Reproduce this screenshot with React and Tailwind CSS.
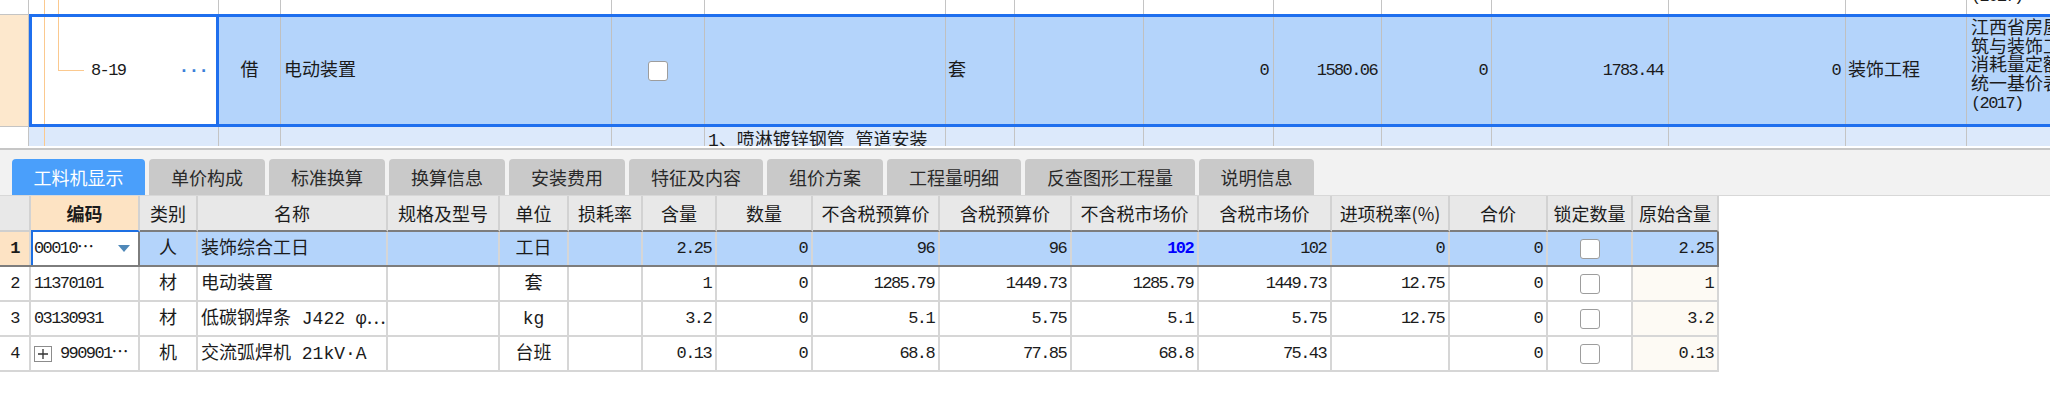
import React from 'react';

const mono = "font-['Liberation_Mono','Noto_Sans_CJK_SC',monospace]";
const num = 'text-[17px] tracking-[-1.6px]';
const tree = 'absolute w-px bg-[#fbc98f]';

// top grid (item list above the tabs)
const midCols = ['w-[62px]', 'w-[331px]', 'w-[93px]', 'w-[241px]', 'w-[69px]', 'w-[129px]', 'w-[130px]', 'w-[108px]', 'w-[110px]', 'w-[177px]', 'w-[177px]', 'w-[121px]'];

const tabs = [
  { label: '工料机显示', w: 'w-[133px]', active: true },
  { label: '单价构成', w: 'w-[116px]' },
  { label: '标准换算', w: 'w-[116px]' },
  { label: '换算信息', w: 'w-[116px]' },
  { label: '安装费用', w: 'w-[116px]' },
  { label: '特征及内容', w: 'w-[134px]' },
  { label: '组价方案', w: 'w-[116px]' },
  { label: '工程量明细', w: 'w-[134px]' },
  { label: '反查图形工程量', w: 'w-[170px]' },
  { label: '说明信息', w: 'w-[115px]' },
];

// bottom grid columns
const cols = [
  { key: 'no', label: '', w: 'w-[31px]', align: 'justify-center' },
  { key: 'code', label: '编码', w: 'w-[109px]', align: 'justify-start' },
  { key: 'type', label: '类别', w: 'w-[58px]', align: 'justify-center' },
  { key: 'name', label: '名称', w: 'w-[190px]', align: 'justify-start' },
  { key: 'spec', label: '规格及型号', w: 'w-[112px]', align: 'justify-start' },
  { key: 'unit', label: '单位', w: 'w-[69px]', align: 'justify-center' },
  { key: 'loss', label: '损耗率', w: 'w-[74px]', align: 'justify-end' },
  { key: 'qty', label: '含量', w: 'w-[74px]', align: 'justify-end' },
  { key: 'count', label: '数量', w: 'w-[96px]', align: 'justify-end' },
  { key: 'p1', label: '不含税预算价', w: 'w-[127px]', align: 'justify-end' },
  { key: 'p2', label: '含税预算价', w: 'w-[132px]', align: 'justify-end' },
  { key: 'p3', label: '不含税市场价', w: 'w-[127px]', align: 'justify-end' },
  { key: 'p4', label: '含税市场价', w: 'w-[133px]', align: 'justify-end' },
  { key: 'tax', label: '进项税率(%)', w: 'w-[118px]', align: 'justify-end' },
  { key: 'total', label: '合价', w: 'w-[98px]', align: 'justify-end' },
  { key: 'lock', label: '锁定数量', w: 'w-[85px]', align: 'justify-center' },
  { key: 'orig', label: '原始含量', w: 'w-[86px]', align: 'justify-end' },
];

const rows = [
  { no: '1', code: '00010⋯', type: '人', name: '装饰综合工日', unit: '工日', qty: '2.25', count: '0', p1: '96', p2: '96', p3: '102', p4: '102', tax: '0', total: '0', orig: '2.25' },
  { no: '2', code: '11370101', type: '材', name: '电动装置', unit: '套', qty: '1', count: '0', p1: '1285.79', p2: '1449.73', p3: '1285.79', p4: '1449.73', tax: '12.75', total: '0', orig: '1' },
  { no: '3', code: '03130931', type: '材', name: '低碳钢焊条 J422 φ⋯', unit: 'kg', qty: '3.2', count: '0', p1: '5.1', p2: '5.75', p3: '5.1', p4: '5.75', tax: '12.75', total: '0', orig: '3.2' },
  { no: '4', code: '990901⋯', type: '机', name: '交流弧焊机 21kV·A', unit: '台班', qty: '0.13', count: '0', p1: '68.8', p2: '77.85', p3: '68.8', p4: '75.43', tax: '', total: '0', orig: '0.13', plus: true },
];

const numeric = ['qty', 'count', 'p1', 'p2', 'p3', 'p4', 'tax', 'total', 'orig', 'no'];

const Checkbox = () => (
  <span className="inline-block w-[20px] h-[20px] bg-white border border-[#9d9d9d] rounded-[3px]" />
);

const TopRowA = () => (
  <div className="flex h-[14px] overflow-hidden bg-white">
    <div className="w-[29px] shrink-0 border-r border-[#c4c4c4]" />
    <div className="relative w-[190px] shrink-0 border-r border-[#c4c4c4]">
      <span className={`${tree} left-[15px] top-0 bottom-0`} />
      <span className={`${tree} left-[29px] top-0 bottom-0`} />
    </div>
    {midCols.map((w, i) => (
      <div key={i} className={`${w} shrink-0 border-r border-[#c4c4c4]`} />
    ))}
    <div className="w-[140px] shrink-0 flex items-end pl-[4px] leading-[18px]">
      <span className={`mb-[8px] whitespace-nowrap ${num}`}>(2017)</span>
    </div>
  </div>
);

const TopRowB = () => (
  <div className="flex h-[113px]">
    <div className="w-[29px] shrink-0 bg-[#fde8cd] border-y border-r border-[#c4c4c4]" />
    <div className="flex border-y-[3px] border-[#1f6fee] bg-[#b4d4fb]">
      {/* code cell, being edited */}
      <div className="relative w-[190px] shrink-0 bg-white border-x-[3px] border-[#1f6fee] flex items-center justify-between pl-[59px] pr-[8px]">
        <span className={`${tree} left-[12px] top-0 bottom-0`} />
        <span className={`${tree} left-[26px] top-0 h-[53px]`} />
        <span className="absolute left-[26px] top-[53px] w-[26px] h-px bg-[#fbc98f]" />
        <span className={num}>8-19</span>
        <span className="text-[#3b7fd8] font-bold tracking-[-1px] leading-none">···</span>
      </div>
      <div className="w-[62px] shrink-0 border-r border-[#c0c0c0] flex items-center justify-center">借</div>
      <div className="w-[331px] shrink-0 border-r border-[#c0c0c0] flex items-center pl-[3px]">电动装置</div>
      <div className="w-[93px] shrink-0 border-r border-[#c0c0c0] flex items-center justify-center"><Checkbox /></div>
      <div className="w-[241px] shrink-0 border-r border-[#c0c0c0]" />
      <div className="w-[69px] shrink-0 border-r border-[#c0c0c0] flex items-center pl-[2px]">套</div>
      <div className="w-[129px] shrink-0 border-r border-[#c0c0c0]" />
      <div className={`w-[130px] shrink-0 border-r border-[#c0c0c0] flex items-center justify-end pr-[5px] ${num}`}>0</div>
      <div className={`w-[108px] shrink-0 border-r border-[#c0c0c0] flex items-center justify-end pr-[4px] ${num}`}>1580.06</div>
      <div className={`w-[110px] shrink-0 border-r border-[#c0c0c0] flex items-center justify-end pr-[4px] ${num}`}>0</div>
      <div className={`w-[177px] shrink-0 border-r border-[#c0c0c0] flex items-center justify-end pr-[5px] ${num}`}>1783.44</div>
      <div className={`w-[177px] shrink-0 border-r border-[#c0c0c0] flex items-center justify-end pr-[5px] ${num}`}>0</div>
      <div className="w-[121px] shrink-0 border-r border-[#c0c0c0] flex items-center pl-[2px]">装饰工程</div>
      <div className="w-[140px] shrink-0 pl-[4px] pt-[3px] leading-[18.7px] whitespace-nowrap">
        <div>江西省房屋建</div>
        <div>筑与装饰工程</div>
        <div>消耗量定额及</div>
        <div>统一基价表</div>
        <div className={num}>(2017)</div>
      </div>
    </div>
  </div>
);

const TopRowC = () => (
  <div className="flex h-[19px] overflow-hidden">
    <div className="w-[29px] shrink-0 bg-white border-r border-[#c4c4c4]" />
    <div className="flex bg-[#dce9fb]">
      <div className="relative w-[190px] shrink-0 border-r border-[#c4c4c4]">
        <span className={`${tree} left-[15px] top-0 bottom-0`} />
      </div>
      {midCols.map((w, i) => (
        <div key={i} className={`${w} shrink-0 border-r border-[#c4c4c4] pt-[5px] pl-[3px] leading-[18px] whitespace-nowrap`}>
          {i === 3 ? '1、喷淋镀锌钢管 管道安装' : ''}
        </div>
      ))}
      <div className="w-[140px] shrink-0" />
    </div>
  </div>
);

const Cell = ({ col, row, first }) => {
  const v = row[col.key];
  const isNum = numeric.includes(col.key) || col.key === 'code';
  let cls = `${col.w} shrink-0 h-full flex items-center border-r-2 border-[#d6d6d6] ${col.align}`;
  if (col.align === 'justify-end') cls += ' pr-[4px]';
  if (col.align === 'justify-start') cls += ' pl-[3px]';

  if (col.key === 'no') {
    return (
      <div className={`${cls} ${first ? 'bg-[#fde3c4] font-bold' : 'bg-white'} ${num}`}>{v}</div>
    );
  }
  if (col.key === 'code' && first) {
    return (
      <div className={`${col.w} shrink-0 h-full flex items-center justify-between bg-white border-l-2 border-l-[#1d6fe3] border-r-2 border-r-[#7d7d7d] pl-[1px] pr-[8px]`}>
        <span className={num}>{v}</span>
        <svg width="12" height="7" viewBox="0 0 12 7"><polygon points="0,0 12,0 6,7" fill="#4f88b8" /></svg>
      </div>
    );
  }
  if (col.key === 'code' && row.plus) {
    return (
      <div className={`${cls} gap-[8px]`}>
        <span className="w-[18px] h-[16px] border border-[#8c8c8c] flex items-center justify-center bg-white">
          <svg width="10" height="10" viewBox="0 0 10 10"><path d="M5 0v10M0 5h10" stroke="#333" strokeWidth="1.3" /></svg>
        </span>
        <span className={num}>{v}</span>
      </div>
    );
  }
  if (col.key === 'lock') {
    return <div className={cls}><Checkbox /></div>;
  }
  const bg = col.key === 'orig' && !first ? ' bg-[#fdfaf4]' : '';
  const blue = first && col.key === 'p3' ? ' text-[#0000ff] font-bold' : '';
  const last = col.key === 'orig' && first ? ' border-r-[#7d7d7d]' : '';
  return (
    <div className={`${cls}${bg}${blue}${last} whitespace-nowrap overflow-hidden ${isNum ? num : ''}`}>{v}</div>
  );
};

export default function App() {
  return (
    <div className={`w-[2050px] h-[415px] overflow-hidden bg-white text-[18px] leading-[20px] text-[#1b1b1b] ${mono}`}>
      <TopRowA />
      <TopRowB />
      <TopRowC />
      <div className="h-[2px] bg-white" />
      <div className="h-[2px] bg-[#c6c6c6]" />

      {/* tabs */}
      <div className="h-[46px] bg-[#f2f2f2] border-b border-[#d8d8d8] pt-[9px] pl-[12px] flex gap-[4px] font-['Noto_Sans_CJK_SC',sans-serif]">
        {tabs.map((t) => (
          <div
            key={t.label}
            className={`${t.w} h-[36px] rounded-t-[4px] flex items-center justify-center text-[18px] ${t.active ? 'bg-[#4a9ffb] text-white' : 'bg-[#c9c9c9] text-[#2a2a2a]'}`}
          >
            {t.label}
          </div>
        ))}
      </div>

      {/* header */}
      <div className="flex h-[36px]">
        {cols.map((c) => (
          <div
            key={c.key}
            className={`${c.w} shrink-0 flex items-center justify-center border-r-2 border-r-[#d2d2d2] border-b-2 ${c.key === 'code' ? 'bg-[#fde3c3] font-bold border-b-[#1d6fe3]' : c.key === 'no' ? 'bg-[#e8e8e8] border-b-[#cfcfcf]' : 'bg-[#e8e8e8] border-b-[#7d7d7d]'} font-['Noto_Sans_CJK_SC',sans-serif]`}
          >
            {c.label}
          </div>
        ))}
      </div>

      {/* body */}
      {rows.map((r, i) => (
        <div
          key={r.no}
          className={`flex h-[35px] w-[1719px] border-b-2 ${i === 0 ? 'bg-[#b4d4fb] border-[#7d7d7d]' : 'bg-white border-[#d6d6d6]'}`}
        >
          {cols.map((c) => (
            <Cell key={c.key} col={c} row={r} first={i === 0} />
          ))}
        </div>
      ))}
    </div>
  );
}
